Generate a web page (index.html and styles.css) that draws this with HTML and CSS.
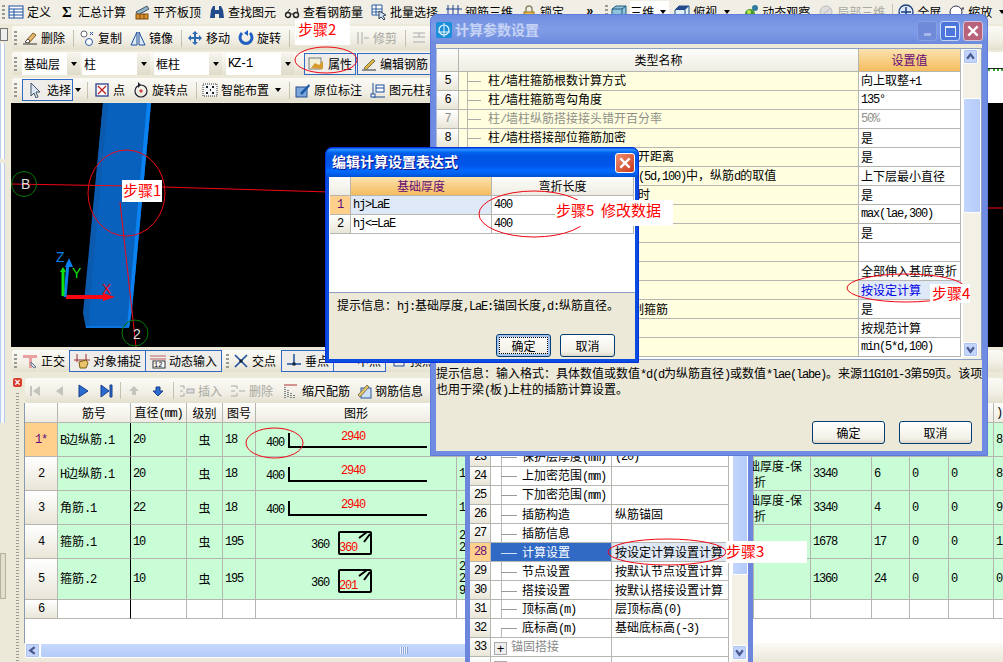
FILE: index.html
```html
<!DOCTYPE html>
<html lang="zh-CN">
<head>
<meta charset="utf-8">
<title>计算参数设置</title>
<link rel="stylesheet" href="styles.css">
</head>
<body>
<div class="app">

<div class="bar r1">
  <span class="grip"></span>
  <span class="t"><svg class="i" viewBox="0 0 16 16"><rect x="1" y="2" width="14" height="12" fill="#fff" stroke="#1c4f9c"/><path d="M1 5h14M6 5v9M1 8h14M1 11h14" stroke="#1c4f9c"/></svg>定义</span>
  <span class="t"><span class="sigma">Σ</span>汇总计算</span>
  <span class="t"><svg class="i" viewBox="0 0 16 16"><path d="M2 8l11-6 2 3-11 6z" fill="#8fb2c8" stroke="#456"/><rect x="2" y="10" width="12" height="5" fill="#d9902a" stroke="#7a4a10"/><path d="M6 10v5M10 10v5" stroke="#7a4a10"/></svg>平齐板顶</span>
  <span class="t"><svg class="i" viewBox="0 0 16 16"><path d="M2 6l2-4h2v12H1zM14 6l-2-4h-2v12h5zM6 6h4v4H6z" fill="#234b8c"/></svg>查找图元</span>
  <span class="t"><svg class="i" viewBox="0 0 16 16"><circle cx="4" cy="11" r="2.5" fill="none" stroke="#222" stroke-width="1.4"/><circle cx="12" cy="11" r="2.5" fill="none" stroke="#222" stroke-width="1.4"/><path d="M6 10h4M2 10l4-5M14 10l-1-6" stroke="#222" fill="none"/></svg>查看钢筋量</span>
  <span class="t"><svg class="i" viewBox="0 0 16 16"><path d="M1 1h10v10H1zM1 5h10M1 8h10M5 1v10" fill="#fff" stroke="#29599e"/><path d="M8 7l7 4-3 1 2 3-1 1-3-3-2 2z" fill="#cfe0f5" stroke="#345"/></svg>批量选择</span>
  <span class="t"><svg class="i" viewBox="0 0 16 16"><path d="M2 1v14M7 1v14M12 1v14M0 5h16M0 11h16" stroke="#1c3f90" fill="none"/></svg>钢筋三维</span>
  <span class="t"><svg class="i" viewBox="0 0 16 16"><path d="M5 8V5a3 3 0 016 0v3" fill="none" stroke="#8a8a6a" stroke-width="1.5"/><rect x="3" y="8" width="10" height="7" fill="#f0c040" stroke="#96701a"/></svg>锁定</span>
  <span class="more lat">»</span>
  <span class="grip g2"></span>
  <span class="t t0"><svg class="i" viewBox="0 0 16 16"><path d="M1 5l4-3h10v9l-4 4H1z" fill="#8fc3d9" stroke="#1f5a80"/><path d="M1 5h10v10M11 5l4-3" fill="none" stroke="#1f5a80"/></svg><span class="hl">三维<span class="arr"></span></span></span>
  <span class="t"><svg class="i" viewBox="0 0 16 16"><path d="M1 6l4-4h10v9l-4 4H1z" fill="#dfeff6" stroke="#1f4f80"/><path d="M1 6l4-4h10l-4 4z" fill="#244a8c"/><path d="M11 6v9" stroke="#1f4f80"/></svg>俯视<span class="arr a1"></span></span>
  <span class="t"><svg class="i" viewBox="0 0 16 16"><circle cx="7" cy="10" r="5" fill="#4a9a2c"/><circle cx="12" cy="4" r="3" fill="#2f7c9e"/><circle cx="6" cy="8" r="2" fill="#bfe84a"/></svg>动态观察</span>
  <span class="t off"><svg class="i" viewBox="0 0 16 16"><circle cx="8" cy="8" r="6" fill="#ddd" stroke="#bbb"/><path d="M3 12L13 4" stroke="#bbb"/></svg>局部三维</span>
  <span class="sep s1"></span>
  <span class="t"><svg class="i" viewBox="0 0 16 16"><circle cx="8" cy="8" r="7" fill="#dfe8f6" stroke="#1c3f80" stroke-width="1.3"/><path d="M8 3v10M3 8h10" stroke="#1c3f80" stroke-width="1.5"/></svg>全屏</span>
  <span class="t"><svg class="i" viewBox="0 0 16 16"><circle cx="7" cy="8" r="6" fill="#fff" stroke="#335"/><path d="M12 5h3M12 11h3M14 3v2" stroke="#335"/></svg>缩放<span class="arr a2"></span></span>
</div>

<div class="body">
  <aside class="side">
    <div class="tab"></div>
    <div class="tree"></div>
    <div class="tree tree2"></div>
    <div class="tabs"></div>
  </aside>

  <main class="main">
    <div class="bar r2">
      <span class="grip"></span>
      <span class="t"><svg class="i" viewBox="0 0 16 16"><path d="M1 14h14" stroke="#333"/><path d="M3 12l8-9 3 2-7 8z" fill="#e9b96e" stroke="#7a5a20"/><path d="M3 12l3-3 2 2-2 2z" fill="#fff" stroke="#555"/></svg>删除</span>
      <span class="sep"></span>
      <span class="t"><svg class="i" viewBox="0 0 16 16"><circle cx="5" cy="4" r="3" fill="#fff" stroke="#667"/><circle cx="10" cy="12" r="3.5" fill="#fff" stroke="#29599e"/><path d="M11 2l3 3M14 2l-3 3" stroke="#29599e"/></svg>复制</span>
      <span class="t"><svg class="i" viewBox="0 0 16 16"><path d="M7 2L1 15h6zM9 2l6 13H9z" fill="#dfeaf8" stroke="#1c4f9c"/></svg>镜像</span>
      <span class="sep"></span>
      <span class="t"><svg class="i" viewBox="0 0 16 16"><path d="M8 1l3 3H9v3h3V5l3 3-3 3V9H9v3h2l-3 3-3-3h2V9H4v2L1 8l3-3v2h3V4H5z" fill="#2d6bb5"/></svg>移动</span>
      <span class="t"><svg class="i" viewBox="0 0 16 16"><path d="M4 3a6 6 0 108 0" fill="none" stroke="#2060c0" stroke-width="3"/><path d="M10 0v6l-4-3z" fill="#2060c0"/></svg>旋转</span>
      <span class="sep"></span>
      <span class="t off t-gap"><svg class="i" viewBox="0 0 16 16"><path d="M4 2v12M8 2v12M10 8h5" stroke="#aaa" fill="none"/></svg>修剪</span>
      <span class="sep"></span>
      <span class="t off"><svg class="i" viewBox="0 0 16 16"><path d="M2 3h12M2 7h12M2 12h12M8 3v4" stroke="#aaa" fill="none"/></svg>打断</span>
    </div>

    <div class="bar r3">
      <span class="grip"></span>
      <span class="combo c-s">基础层<i class="drop"></i></span>
      <span class="combo">柱<i class="drop"></i></span>
      <span class="combo">框柱<i class="drop"></i></span>
      <span class="combo"><span class="lat">KZ-1</span><i class="drop"></i></span>
      <span class="tb-btn b-first"><svg class="i" viewBox="0 0 16 16"><rect x="1" y="2" width="12" height="11" fill="#f3f0d8" stroke="#7a7a7a"/><path d="M3 12l4-5 4 2 4-4v8z" fill="#d89a2c"/></svg>属性</span>
      <span class="tb-btn"><svg class="i" viewBox="0 0 16 16"><path d="M1 14h14" stroke="#333"/><path d="M3 12l9-9 2 2-9 9z" fill="#e0b040" stroke="#775"/></svg>编辑钢筋</span>
    </div>

    <div class="bar r4">
      <span class="grip"></span>
      <span class="tb-btn b-sel"><svg class="i" viewBox="0 0 16 16"><path d="M3 1l9 9H8l2 5-2 1-2-5-3 3z" fill="#dbe6f6" stroke="#456"/></svg>选择</span>
      <span class="arr a3"></span>
      <span class="sep"></span>
      <span class="t t-pt"><svg class="i" viewBox="0 0 16 16"><rect x="2" y="2" width="12" height="12" fill="#fff" stroke="#27408c" stroke-width="1.3"/><path d="M4 4l8 8M12 4l-8 8" stroke="#c02020" stroke-width="1.3"/></svg>点</span>
      <span class="t"><svg class="i" viewBox="0 0 16 16"><circle cx="8" cy="9" r="6" fill="none" stroke="#223" stroke-width="1.2"/><path d="M5 0l3 3-3 3z" fill="#223"/><path d="M8 7v4M6 9h4" stroke="#c02020"/></svg>旋转点</span>
      <span class="sep"></span>
      <span class="t"><svg class="i" viewBox="0 0 16 16"><rect x="1" y="2" width="14" height="12" fill="#f6f6f6" stroke="#333" stroke-dasharray="1 1"/><path d="M4 5h2M10 5h2M4 11h2M10 11h2M8 8h1" stroke="#123" stroke-width="2"/></svg>智能布置<span class="arr a4"></span></span>
      <span class="sep"></span>
      <span class="t"><svg class="i" viewBox="0 0 16 16"><rect x="1" y="5" width="11" height="10" fill="#7da8dc" stroke="#2a4f8c"/><path d="M5 11l9-9 1 2-8 9z" fill="#1c5aa8"/></svg>原位标注</span>
      <span class="t"><svg class="i" viewBox="0 0 16 16"><path d="M3 1v14h12" fill="none" stroke="#1c4f9c"/><rect x="1" y="12" width="4" height="3" fill="#fff" stroke="#1c4f9c"/><rect x="6" y="3" width="8" height="7" fill="#fff" stroke="#1c4f9c"/><path d="M6 6h8" stroke="#1c4f9c"/></svg>图元柱表</span>
    </div>

    <div class="canvas">
      <svg class="scene" viewBox="11 103 992 244">
        <path d="M103 103L84 313l2 15h43l3-20 19-205z" fill="#0862bd"/>
        <path d="M103 103h5L90 300l-1 28h-3l-3-15z" fill="#0b5aae"/>
        <path d="M147 103h4L132 310l-3 18-2-1z" fill="#0a82f2"/>
        <path d="M86 326h43v2H86z" fill="#0a74dc"/>
        <path d="M11 184l119 2 200 6M988 208h15" fill="none" stroke="#f00614"/>
        <path d="M120 202l16 145" stroke="#f00614"/>
        <circle cx="24" cy="184" r="12.500" fill="none" stroke="#0a780a"/>
        <circle cx="135" cy="333" r="13" fill="none" stroke="#0a780a"/>
        <text class="ax w" x="21" y="189">B</text>
        <text class="ax w" x="133" y="339">2</text>
        <ellipse cx="126.500" cy="193" rx="38.500" ry="43" fill="none" stroke="#f00614"/>
        <path d="M66 297h38" stroke="#f80612" stroke-width="4"/>
        <path d="M103 293l12 4-12 4z" fill="#f80612"/>
        <path d="M65 297l3-34" stroke="#0a80f0" stroke-width="3"/>
        <path d="M69 258l4 9h-8z" fill="#0a80f0"/>
        <path d="M63 296v-26" stroke="#10e010" stroke-width="3"/>
        <path d="M63 267l3 5h-6z" fill="#10e010"/>
        <text class="lg zb" x="56" y="262">Z</text>
        <text class="lg yg" x="72" y="278">Y</text>
        <text class="lg xr" x="102" y="294">X</text>
      </svg>
    </div>

    <div class="bar r5">
      <span class="grip"></span>
      <span class="t t5"><svg class="i" viewBox="0 0 16 16"><path d="M1 2h14v3h-5v10H7V5H1z" fill="#e8a0a0"/><path d="M9 9l5 5-2 1-3-3z" fill="#cfdcee" stroke="#678"/></svg>正交</span>
      <span class="tb-btn"><svg class="i" viewBox="0 0 16 16"><path d="M3 1v8M12 1v8" stroke="#a03030"/><path d="M0 7h16" stroke="#a03030"/><path d="M5 9l7-2 2 3-2 5H6z" fill="#e8c46a" stroke="#7a5a10"/></svg>对象捕捉</span>
      <span class="tb-btn b-next"><svg class="i" viewBox="0 0 16 16"><path d="M0 3h16M0 6h16" stroke="#c06060"/><rect x="3" y="8" width="12" height="7" fill="#fff" stroke="#333"/><text class="mini" x="4" y="14">12</text></svg>动态输入</span>
      <span class="grip g5"></span>
      <span class="t t6"><svg class="i" viewBox="0 0 16 16"><path d="M2 2l12 12M14 2L2 14" stroke="#1c4f9c" stroke-width="1.600"/><rect x="6.500" y="6.500" width="3" height="3" fill="#123"/></svg>交点</span>
      <span class="tb-btn"><svg class="i" viewBox="0 0 16 16"><path d="M8 1v10M1 11h14" stroke="#1c4f9c" stroke-width="1.500"/><rect x="6.500" y="9.500" width="3" height="3" fill="#123"/></svg>垂点</span>
      <span class="tb-btn b-next"><svg class="i" viewBox="0 0 16 16"><path d="M1 9h14" stroke="#1c4f9c"/></svg>中点</span>
      <span class="t t7"><svg class="i" viewBox="0 0 16 16"><rect x="3" y="3" width="10" height="10" fill="none" stroke="#1c4f9c"/></svg>顶点</span>
    </div>

    <section class="lower">
      <div class="lgrip"><span class="xbtn">×</span><span class="dots"></span></div>
      <div class="lmain">
        <div class="bar r6">
          <svg class="n" viewBox="0 0 16 16"><path d="M3 3h2v10H3zM13 3v10L6 8z" fill="#c4c4bc"/></svg>
          <svg class="n" viewBox="0 0 16 16"><path d="M12 3v10L5 8z" fill="#c4c4bc"/></svg>
          <svg class="n" viewBox="0 0 16 16"><path d="M4 2v12l9-6z" fill="#2a6bd0" stroke="#163f88"/></svg>
          <svg class="n nl" viewBox="0 0 16 16"><path d="M2 2v12l8-6z" fill="#2a6bd0" stroke="#163f88"/><path d="M11 2h2v12h-2z" fill="#2a6bd0" stroke="#163f88"/></svg>
          <span class="sep"></span>
          <svg class="n" viewBox="0 0 16 16"><path d="M8 3l5 5h-3v4H6V8H3z" fill="#c4c4bc"/></svg>
          <svg class="n nl2" viewBox="0 0 16 16"><path d="M8 13l5-5h-3V4H6v4H3z" fill="#2a6bd0" stroke="#163f88"/></svg>
          <span class="sep"></span>
          <span class="t off"><svg class="i" viewBox="0 0 16 16"><path d="M1 3h4M1 13h4M5 3v3M5 10v3M1 8h3" stroke="#aaa" fill="none"/><rect x="8" y="6" width="7" height="4" fill="#ddd" stroke="#aaa"/></svg>插入</span>
          <span class="t off t-x"><svg class="i" viewBox="0 0 16 16"><path d="M1 3h6v3M1 13h6v-3M1 8h4" stroke="#aaa" fill="none"/><path d="M9 8h6" stroke="#aaa"/></svg>删除</span>
          <span class="t t-y"><svg class="i" viewBox="0 0 16 16"><path d="M2 4v11M5 7v8M8 10v5M11 12v3" stroke="#123" stroke-dasharray="1 1"/><path d="M1 2h13" stroke="#b03030"/></svg>缩尺配筋</span>
          <span class="t"><svg class="i" viewBox="0 0 16 16"><rect x="5" y="5" width="10" height="10" fill="#cfe0f5" stroke="#29599e"/><path d="M2 12L11 2l2 2-9 10z" fill="#e8c46a" stroke="#775"/></svg>钢筋信息</span>
        </div>

        <div class="gridwrap">
          <table class="bars">
            <colgroup><col class="k1"><col class="k2"><col class="k3"><col class="k4"><col class="k5"><col class="k6"><col class="k7"><col class="k8"><col class="k9"><col class="k10"><col class="k11"><col class="k12"><col class="k13"></colgroup>
            <thead>
              <tr class="rh"><th class="hd"></th><th class="hd">筋号</th><th class="hd">直径<span class="lat">(mm)</span></th><th class="hd">级别</th><th class="hd">图号</th><th class="hd">图形</th><th class="hd"></th><th class="hd"></th><th class="hd"></th><th class="hd"></th><th class="hd"></th><th class="hd"></th><th class="hd hl-end lat">)</th></tr>
            </thead>
            <tbody>
              <tr class="r34 on">
                <th class="num cur lat">1*</th><td class="name"><span class="lat">B</span>边纵筋<span class="lat">.1</span></td><td class="lat">20</td><td class="ctr">虫</td><td class="lat">18</td>
                <td class="fig"><svg class="shape" viewBox="0 0 200 33"><path d="M33 10v14h138" fill="none" stroke="#000" stroke-width="2"/><text class="lat" x="10" y="23">400</text><text class="lat red" x="85" y="17">2940</text></svg></td>
                <td class="lat">1</td><td></td><td></td><td></td><td></td><td></td><td class="lat">8</td>
              </tr>
              <tr class="r34 on">
                <th class="num lat">2</th><td class="name"><span class="lat">H</span>边纵筋<span class="lat">.1</span></td><td class="lat">20</td><td class="ctr">虫</td><td class="lat">18</td>
                <td class="fig"><svg class="shape" viewBox="0 0 200 33"><path d="M33 10v14h138" fill="none" stroke="#000" stroke-width="2"/><text class="lat" x="10" y="22">400</text><text class="lat red" x="85" y="17">2940</text></svg></td>
                <td class="lat">1</td><td class="over">础厚度<span class="lat">-</span>保<br>折</td><td class="lat">3340</td><td class="lat">6</td><td class="lat">0</td><td class="lat">0</td><td class="lat">8</td>
              </tr>
              <tr class="r34 on">
                <th class="num lat">3</th><td class="name">角筋<span class="lat">.1</span></td><td class="lat">22</td><td class="ctr">虫</td><td class="lat">18</td>
                <td class="fig"><svg class="shape" viewBox="0 0 200 33"><path d="M33 10v14h138" fill="none" stroke="#000" stroke-width="2"/><text class="lat" x="10" y="22">400</text><text class="lat red" x="85" y="17">2940</text></svg></td>
                <td class="lat">1</td><td class="over">础厚度<span class="lat">-</span>保<br>折</td><td class="lat">3340</td><td class="lat">4</td><td class="lat">0</td><td class="lat">0</td><td class="lat">9</td>
              </tr>
              <tr class="r34 on">
                <th class="num lat">4</th><td class="name">箍筋<span class="lat">.1</span></td><td class="lat">10</td><td class="ctr">虫</td><td class="lat">195</td>
                <td class="fig"><svg class="shape" viewBox="0 0 200 33"><rect x="83" y="7" width="32" height="22" rx="1" fill="none" stroke="#000" stroke-width="2"/><path d="M103 13l8-6M108 17l6-8" stroke="#000" stroke-width="2"/><text class="lat" x="55" y="23">360</text><text class="lat red" x="83" y="26">360</text></svg></td>
                <td class="lat lh">2<br>2</td><td></td><td class="lat">1678</td><td class="lat">17</td><td class="lat">0</td><td class="lat">0</td><td class="lat">1</td>
              </tr>
              <tr class="r41 on">
                <th class="num lat">5</th><td class="name">箍筋<span class="lat">.2</span></td><td class="lat">10</td><td class="ctr">虫</td><td class="lat">195</td>
                <td class="fig"><svg class="shape" viewBox="0 0 200 40"><rect x="83" y="11" width="32" height="22" rx="1" fill="none" stroke="#000" stroke-width="2"/><path d="M103 17l8-6M108 21l6-8" stroke="#000" stroke-width="2"/><text class="lat" x="55" y="27">360</text><text class="lat red" x="83" y="30">201</text></svg></td>
                <td class="lat lh">2<br>2<br>9</td><td></td><td class="lat">1360</td><td class="lat">24</td><td class="lat">0</td><td class="lat">0</td><td class="lat">0</td>
              </tr>
              <tr class="r19">
                <th class="num lat">6</th><td class="name"></td><td></td><td></td><td></td><td></td><td></td><td></td><td></td><td></td><td></td><td></td><td></td>
              </tr>
            </tbody>
          </table>
        </div>

        <div class="hscroll">
          <span class="sb-btn"><svg viewBox="0 0 8 8" class="chev"><path d="M6 1L2 4l4 3" fill="none" stroke="#4a5a90" stroke-width="2"/></svg></span>
          <span class="hthumb"><span class="hgrip"></span></span>
        </div>
      </div>
    </section>
  </main>
</div>

<div class="rest"><i class="tick"></i></div>

<div class="pane">
  <table class="plist">
    <colgroup><col class="p1"><col class="p2"><col class="p3"></colgroup>
    <tbody>
      <tr><th class="num lat">23</th><td class="tree-c"><i class="dash"></i>保护层厚度<span class="lat">(mm)</span></td><td class="lat">(20)</td></tr>
      <tr><th class="num lat">24</th><td class="tree-c"><i class="dash"></i>上加密范围<span class="lat">(mm)</span></td><td></td></tr>
      <tr><th class="num lat">25</th><td class="tree-c"><i class="dash"></i>下加密范围<span class="lat">(mm)</span></td><td></td></tr>
      <tr><th class="num lat">26</th><td class="tree-c"><i class="dash"></i>插筋构造</td><td>纵筋锚固</td></tr>
      <tr><th class="num lat">27</th><td class="tree-c"><i class="dash"></i>插筋信息</td><td></td></tr>
      <tr><th class="num cur lat">28</th><td class="tree-c blue"><i class="dash"></i>计算设置</td><td class="pale">按设定计算设置计算</td></tr>
      <tr><th class="num lat">29</th><td class="tree-c"><i class="dash"></i>节点设置</td><td>按默认节点设置计算</td></tr>
      <tr><th class="num lat">30</th><td class="tree-c"><i class="dash"></i>搭接设置</td><td>按默认搭接设置计算</td></tr>
      <tr><th class="num lat">31</th><td class="tree-c"><i class="dash"></i>顶标高<span class="lat">(m)</span></td><td>层顶标高<span class="lat">(0)</span></td></tr>
      <tr><th class="num lat">32</th><td class="tree-c tree-end"><i class="dash"></i>底标高<span class="lat">(m)</span></td><td>基础底标高<span class="lat">(-3)</span></td></tr>
      <tr class="group"><th class="num lat">33</th><td class="grp"><i class="plus">+</i>锚固搭接</td><td></td></tr>
      <tr class="group"><th class="num"></th><td class="grp"><i class="plus"></i></td><td></td></tr>
    </tbody>
  </table>
  <div class="vscroll vs-p">
    <span class="vthumb vt-p"></span>
    <span class="sb-btn sb-b"><svg viewBox="0 0 8 8" class="chev"><path d="M1 2l3 4 3-4" fill="none" stroke="#4a5a90" stroke-width="2"/></svg></span>
  </div>
</div>

<div class="win dlg1">
  <header class="title t-off">
    <svg class="logo" viewBox="0 0 16 16"><rect width="16" height="16" rx="2" fill="#1a8fd8"/><circle cx="8" cy="8" r="5" fill="none" stroke="#e8f6ff" stroke-width="1.200"/><path d="M8 1v14M2 10h12" stroke="#e8f6ff"/></svg>
    <span class="cap">计算参数设置</span>
    <span class="ctl c-min"><i class="minbar"></i></span>
    <span class="ctl c-max"><i class="maxbox"></i></span>
    <span class="ctl c-close off-x"><svg viewBox="0 0 12 12"><path d="M2 2l8 8M10 2l-8 8" stroke="#fff" stroke-width="2"/></svg></span>
  </header>
  <div class="client">
    <div class="gridbox">
      <table class="params">
        <colgroup><col class="q1"><col class="q2"><col class="q3"><col class="q4"></colgroup>
        <thead><tr class="qh"><th class="hd"></th><th class="hd" colspan="2">类型名称</th><th class="hd hot">设置值</th></tr></thead>
        <tbody>
          <tr><th class="num lat">5</th><td class="gut"></td><td><i class="dash2"></i>柱<span class="lat">/</span>墙柱箍筋根数计算方式</td><td class="val">向上取整<span class="lat">+1</span></td></tr>
          <tr><th class="num lat">6</th><td class="gut"></td><td><i class="dash2"></i>柱<span class="lat">/</span>墙柱箍筋弯勾角度</td><td class="val lat">135°</td></tr>
          <tr class="dim"><th class="num lat">7</th><td class="gut"></td><td><i class="dash2"></i>柱<span class="lat">/</span>墙柱纵筋搭接接头错开百分率</td><td class="val lat">50%</td></tr>
          <tr><th class="num lat">8</th><td class="gut"></td><td><i class="dash2"></i>柱<span class="lat">/</span>墙柱搭接部位箍筋加密</td><td class="val">是</td></tr>
          <tr><th class="num lat">9</th><td class="gut"></td><td><i class="dash2"></i>柱<span class="lat">/</span>墙柱纵筋机械连接接头错开距离</td><td class="val">是</td></tr>
          <tr><th class="num lat">10</th><td class="gut"></td><td><i class="dash2"></i>柱<span class="lat">/</span>墙柱箍筋加密间距<span class="lat">L</span>取<span class="lat">min(5d,100)</span>中，纵筋<span class="lat">d</span>的取值</td><td class="val">上下层最小直径</td></tr>
          <tr><th class="num lat">11</th><td class="gut"></td><td><i class="dash2"></i>柱<span class="lat">/</span>墙柱变截面处的纵筋弯折时</td><td class="val">是</td></tr>
          <tr><th class="num lat">12</th><td class="gut"></td><td><i class="dash2"></i>柱<span class="lat">/</span>墙柱插筋锚固长度</td><td class="val lat">max(lae,300)</td></tr>
          <tr><th class="num lat">13</th><td class="gut"></td><td><i class="dash2"></i>柱<span class="lat">/</span>墙柱基础插筋弯折</td><td class="val">是</td></tr>
          <tr><th class="num lat">14</th><td class="gut"></td><td><i class="dash2"></i>基础插筋</td><td class="val"></td></tr>
          <tr><th class="num lat">15</th><td class="gut"></td><td><i class="dash2"></i>柱<span class="lat">/</span>墙柱基底弯折方式</td><td class="val">全部伸入基底弯折</td></tr>
          <tr class="pick"><th class="num lat">16</th><td class="gut"></td><td><i class="dash2"></i>基础插筋弯折长度</td><td class="val">按设定计算</td></tr>
          <tr><th class="num lat">17</th><td class="gut"></td><td><i class="dash2"></i>柱墙基础插筋范围内是否设制箍筋</td><td class="val">是</td></tr>
          <tr><th class="num lat">18</th><td class="gut"></td><td><i class="dash2"></i>柱<span class="lat">/</span>墙柱箍筋加密范围</td><td class="val">按规范计算</td></tr>
          <tr><th class="num lat">19</th><td class="gut"></td><td><i class="dash2"></i>柱<span class="lat">/</span>墙柱箍筋起步距离</td><td class="val lat">min(5*d,100)</td></tr>
        </tbody>
      </table>
      <div class="vscroll vs-m">
        <span class="sb-btn"><svg viewBox="0 0 8 8" class="chev"><path d="M1 6l3-4 3 4" fill="none" stroke="#4a5a90" stroke-width="2"/></svg></span>
        <span class="vthumb vt-m"></span>
        <span class="sb-btn sb-b"><svg viewBox="0 0 8 8" class="chev"><path d="M1 2l3 4 3-4" fill="none" stroke="#4a5a90" stroke-width="2"/></svg></span>
      </div>
    </div>
    <p class="hint">提示信息：输入格式：具体数值或数值<span class="lat">*d(d</span>为纵筋直径<span class="lat">)</span>或数值<span class="lat">*lae(labe)</span>。来源<span class="lat">11G101-3</span>第<span class="lat">59</span>页。该项<br>也用于梁<span class="lat">(</span>板<span class="lat">)</span>上柱的插筋计算设置。</p>
    <div class="actions">
      <button class="xp">确定</button>
      <button class="xp">取消</button>
    </div>
  </div>
</div>

<div class="win dlg2">
  <header class="title t-on">
    <span class="cap2">编辑计算设置表达式</span>
    <span class="ctl c-close2"><svg viewBox="0 0 12 12"><path d="M2 2l8 8M10 2l-8 8" stroke="#fff" stroke-width="2"/></svg></span>
  </header>
  <div class="client cl2">
    <div class="exprbox">
      <table class="expr">
        <colgroup><col class="e1"><col class="e2"><col class="e3"></colgroup>
        <thead><tr class="eh"><th class="hd"></th><th class="hd hot">基础厚度</th><th class="hd">弯折长度</th></tr></thead>
        <tbody>
          <tr><th class="num cur lat">1</th><td class="pale lat">hj&gt;LaE</td><td class="lat">400</td></tr>
          <tr><th class="num lat">2</th><td class="lat">hj&lt;=LaE</td><td class="lat">400</td></tr>
        </tbody>
      </table>
    </div>
    <p class="hint2">提示信息：<span class="lat">hj:</span>基础厚度<span class="lat">,LaE:</span>锚固长度<span class="lat">,d:</span>纵筋直径。</p>
    <div class="actions a2nd">
      <button class="xp def">确定</button>
      <button class="xp">取消</button>
    </div>
  </div>
</div>

<svg class="marks" viewBox="0 0 1003 662">
  <ellipse cx="326" cy="60" rx="31" ry="13" />
  <ellipse cx="274.500" cy="443" rx="28.500" ry="15" />
  <ellipse cx="667" cy="552" rx="59" ry="13" />
  <ellipse cx="906" cy="288" rx="59" ry="14" />
  <ellipse cx="534" cy="214" rx="55" ry="23" />
</svg>
<span class="note n1">步骤1</span>
<span class="note n2">步骤2</span>
<span class="note n3">步骤3</span>
<span class="note n4">步骤4</span>
<span class="note n5">步骤5&nbsp;&nbsp;修改数据</span>

</div>
</body>
</html>
```

FILE: styles.css
```css
* { box-sizing: border-box; }
html, body { margin: 0; padding: 0; }
body { background: #ece9d8; color: #000; font: 12px/14px "Noto Sans CJK SC", "Liberation Sans", sans-serif; }
.app { position: relative; width: 1003px; height: 662px; overflow: hidden; display: flex; flex-direction: column; background: #ece9d8; }
.lat { font-family: "Liberation Mono", monospace; font-size: 12px; letter-spacing: -1.2px; }

/* toolbars */
.bar { display: flex; align-items: center; white-space: nowrap; background: linear-gradient(#fbfaf5, #f1efe5 60%, #e4e0ce); border-radius: 3px; flex: none; }
.grip { width: 3px; height: 14px; margin-right: 5px; flex: none; background: repeating-linear-gradient(#9a9a90 0 2px, transparent 2px 4px); }
.g2 { margin-left: 0; margin-right: 5px; }
.g5 { margin-left: 4px; margin-right: 4px; }
.t { display: flex; align-items: center; gap: 3px; margin-right: 8px; flex: none; }
.off { color: #a8a8a0; }
.i { width: 16px; height: 16px; flex: none; display: block; }
.sep { width: 1px; height: 17px; background: #c5c2b0; margin-right: 5px; flex: none; }
.s1 { margin-left: -1px; margin-right: 5px; }
.arr { display: inline-block; width: 0; height: 0; border: 3.5px solid transparent; border-top: 4px solid #000; border-bottom: 0; flex: none; }
.sigma { font: bold 15px/16px "Liberation Serif", serif; width: 16px; text-align: center; }

.r1 { height: 24px; padding-left: 0; background: #f1efe5; }
.r1 > .grip { margin-left: 2px; margin-right: 3px; }
.more { width: 10px; margin: 0 11px 0 14px; font-weight: bold; }
.t0 { margin-right: 5px; }
.hl { display: flex; align-items: center; gap: 6px; background: #fff; padding-right: 3px; height: 22px; }
.a1 { margin-left: 4px; margin-right: 5px; }
.a2 { margin-left: 4px; }

.body { flex: 1; display: flex; min-height: 0; }
.side { width: 11px; flex: none; display: flex; flex-direction: column; padding-top: 4px; background: #ece9d8; }
.tab { height: 13px; width: 8px; border: 1px solid #777; background: #eee; }
.tree { height: 116px; width: 5px; border-right: 1px solid #b9cdea; border-left: 1px solid #b9cdea; background: #fff; margin-top: 2px; }
.tree2 { height: 260px; margin-top: 4px; background: #f5f8fd; }
.tabs { height: 46px; width: 6px; margin-top: 130px; background: #e2dfcc; border: 1px solid #b5b29e; }
.main { flex: 1; min-width: 0; display: flex; flex-direction: column; }

.r2 { height: 24px; margin: 2px 0 2px 1px; padding-left: 2px; }
.t-gap { margin-left: 59px; }
.r3 { height: 23px; margin: 0 0 3px 1px; padding-left: 2px; }
.combo { width: 68px; height: 22px; background: #fff; margin-right: 4px; display: flex; align-items: center; padding-left: 2px; justify-content: space-between; flex: none; }
.c-s { width: 58px; margin-right: 2px; }
.drop { width: 13px; height: 22px; background: linear-gradient(#f6f4ec, #dedbc9); flex: none; display: flex; align-items: center; justify-content: center; }
.drop::after { content: ""; border: 3.5px solid transparent; border-top: 4px solid #000; border-bottom: 0; }
.tb-btn { display: flex; align-items: center; gap: 3px; height: 22px; padding: 0 3px; border: 1px solid #316ac5; background: #eeedea; flex: none; }
.b-first { margin-left: 6px; gap: 4px; padding: 0 3px; margin-right: 1px; }
.b-next { margin-left: -1px; }
.r4 { height: 24px; margin-left: 1px; padding-left: 2px; }
.b-sel { padding: 0 4px 0 5px; gap: 3px; width: 51px; }
.a3 { margin: 0 6px 0 2px; }
.t-pt { margin-left: 1px; gap: 3px; }
.a4 { margin-left: 3px; }

.canvas { position: relative; height: 244px; background: #000; overflow: hidden; flex: none; margin-top: 1px; }
.scene { position: absolute; inset: 0; width: 100%; height: 100%; }
.ax { font: 14px "Liberation Sans", sans-serif; }
.w { fill: #dcdcdc; }
.lg { font: 14px "Liberation Sans", sans-serif; }
.zb { fill: #0a80f0; }
.yg { fill: #10e010; }
.xr { fill: #f00614; }

.r5 { height: 22px; margin: 3px 0 0 1px; padding-left: 2px; }
.r5 .tb-btn { height: 22px; padding: 0 4px; }
.t5 { margin-right: 4px; }
.t6 { margin-right: 5px; }
.t7 { margin-left: 5px; }
.mini { font: 7px "Liberation Mono", monospace; }

.lower { flex: 1; display: flex; min-height: 0; margin-top: 4px; }
.lgrip { width: 13px; flex: none; display: flex; flex-direction: column; align-items: center; }
.xbtn { width: 9px; height: 9px; margin-top: 2px; background: #d83c2c; border-radius: 2px; color: #fff; font: bold 10px/9px "Liberation Sans", sans-serif; text-align: center; }
.dots { flex: 1; width: 3px; margin-top: 6px; background: repeating-linear-gradient(#9a9a90 0 1px, transparent 1px 3px); }
.lmain { flex: 1; min-width: 0; display: flex; flex-direction: column; }
.r6 { height: 25px; margin: 2px 0 0 1px; padding-left: 2px; }
.n { width: 16px; height: 16px; margin-right: 8px; flex: none; }
.nl { margin-right: 5px; }
.nl2 { margin-right: 7px; }
.t-x { margin-right: 10px; }
.t-y { margin-right: 6px; }

.gridwrap { flex: 1; min-height: 0; overflow: hidden; background: #fff; border-left: 1px solid #8a9ab0; }
table { border-collapse: separate; border-spacing: 0; table-layout: fixed; }
th, td { padding: 0 2px; border-right: 1px solid #b6b6b0; border-bottom: 1px solid #b6b6b0; overflow: hidden; white-space: nowrap; font-weight: 400; text-align: left; }
.hd { background: linear-gradient(#fdfdfb, #eeece2); text-align: center; color: #000; }
.hot { background: linear-gradient(#fbe2ae, #f5bc5e); color: #660a78; }
.num { background: linear-gradient(#fff, #e9e6d8); text-align: center; color: #000; padding: 0; }
.num.cur { background: #ffd08c; color: #660a78; }

.bars { width: 1010px; }
.k1 { width: 33px; } .k2 { width: 73px; } .k3 { width: 56px; } .k4 { width: 36px; } .k5 { width: 33px; } .k6 { width: 201px; }
.k7 { width: 297px; } .k8 { width: 57px; } .k9 { width: 61px; } .k10 { width: 38px; } .k11 { width: 39px; } .k12 { width: 45px; } .k13 { width: 41px; }
.rh { height: 20px; }
.r34 { height: 34px; }
.r41 { height: 41px; }
.r19 { height: 19px; }
.on td { background: #c9fdd6; }
.bars .name { border-right: 1px solid #000; }
.ctr { text-align: center; }
.fig { padding: 0; }
.shape { display: block; width: 200px; }
.shape text { fill: #000; }
.shape .red { fill: #f00; }
.lh { line-height: 12px; }
.bars .over { padding: 0; line-height: 13px; text-indent: -6px; overflow: visible; position: relative; }
.hd.hl-end { text-align: left; padding-left: 2px; }

.hscroll { height: 17px; display: flex; margin: 0 0 2px 1px; background: linear-gradient(#fbfaf5, #ece9dd); flex: none; }
.sb-btn { width: 15px; height: 15px; border: 1px solid #fff; background: #c3d5fd; border-radius: 2px; display: flex; align-items: center; justify-content: center; flex: none; box-shadow: 0 0 0 1px #aec4ef inset; }
.chev { width: 9px; height: 9px; }
.hthumb { width: 430px; height: 15px; background: linear-gradient(#c6d8fc, #b4cbf9); border: 1px solid #fff; border-radius: 2px; display: flex; justify-content: flex-end; align-items: center; padding-right: 61px; }
.hgrip { width: 8px; height: 7px; background: repeating-linear-gradient(90deg, #eef3fe 0 1px, #8da4da 1px 2px); }

/* strip of the drawing area visible beside the dialog */
.rest { position: absolute; left: 988px; top: 52px; width: 15px; height: 51px; background: #fff; z-index: 1; }
.tick { display: block; margin-top: 16px; height: 3px; border-top: 1px solid #222; border-bottom: 2px dotted #3aa53a; }

/* property pane behind the dialog */
.pane { position: absolute; left: 465px; top: 448px; width: 288px; height: 214px; z-index: 2; display: flex; background: #fff; border: solid #6b86dc; border-width: 0 6px 0 5px; }
.plist { width: 259px; flex: none; align-self: flex-start; }
.p1 { width: 21px; } .p2 { width: 121px; } .p3 { width: 117px; }
.plist tr { height: 19px; }
.plist td { padding: 0 0 0 3px; }
.plist .tree-c { padding: 0 0 0 10px; background: linear-gradient(90deg, #fff 0 10px, #bbb 10px 11px, #fff 11px); }
.plist .tree-end { background: linear-gradient(#fff 0 9px, transparent 9px), linear-gradient(90deg, #fff 0 10px, #bbb 10px 11px, #fff 11px); }
.plist .grp { padding-left: 3px; }
.dash { display: inline-block; vertical-align: middle; width: 16px; height: 1px; background: #999; margin-right: 5px; }
.plist .blue { background: #316ac5; color: #fff; }
.plist .blue .dash { background: #cfe0ff; }
.pale { background: #dfe8f6; }
.group td { color: #888; }
.plus { display: inline-block; width: 13px; height: 13px; margin-right: 4px; text-align: center; border: 1px solid #aaa; color: #000; font: normal 13px/11px "Liberation Sans", sans-serif; vertical-align: middle; background: #eee; }
.vscroll { flex: none; width: 16px; background: #f3f1e6; display: flex; flex-direction: column; }
.vs-p { margin-left: 3px; }
.vthumb { background: linear-gradient(90deg, #c3d5fd, #b4cbf9); border: 1px solid #fff; border-radius: 2px; flex: none; }
.vt-p { height: 127px; }
.sb-b { margin-top: auto; margin-bottom: 2px; }

/* windows */
.win { position: absolute; display: flex; flex-direction: column; border-radius: 7px 7px 0 0; }
.title { flex: none; display: flex; align-items: center; border-radius: 7px 7px 0 0; }
.dlg1 { left: 430px; top: 14px; width: 558px; height: 442px; z-index: 3; background: #6f8ce2; border: 1px solid #5f7cd8; }
.t-off { height: 29px; padding: 0 4px 0 5px; background: linear-gradient(#6f8ee0, #7f9de6 50%, #6c8ade); }
.logo { width: 16px; height: 16px; flex: none; }
.cap { margin: 0 0 2px 3px; color: #c6d3f4; font-weight: 700; font-size: 14px; }
.ctl { width: 20px; height: 20px; margin-left: 3px; border: 1px solid #c4d2f5; border-radius: 3px; display: flex; align-items: center; justify-content: center; flex: none; }
.t-off .ctl { margin-top: 3px; }
.c-min { margin-left: auto; background: #6e8ad8; border-color: #88a0e2; }
.t-off .c-min { margin-left: auto; }
.minbar { width: 7px; height: 3px; background: #a6b8e8; margin-top: 7px; }
.c-max { background: #4d76dc; }
.maxbox { width: 11px; height: 11px; border: 1px solid #e8eefd; border-top-width: 2px; }
.off-x { background: #b8627c; border-color: #d8c4d4; }
.ctl svg { width: 14px; height: 14px; }
.client { flex: 1; background: #ece9d8; margin: 0 5px 4px 5px; display: flex; flex-direction: column; min-height: 0; }
.dlg1 .client { padding-top: 4px; }
.gridbox { height: 312px; display: flex; flex: none; background: #fff; border: 1px solid #8ba0c4; border-left-color: #aebcd4; }
.params { width: 524px; flex: none; align-self: flex-start; }
.q1 { width: 22px; } .q2 { width: 9px; } .q3 { width: 391px; } .q4 { width: 102px; }
.qh { height: 23px; }
.params tbody tr { height: 19px; }
.params td { background: #ffffe0; padding: 0; }
.params td.val { background: #fff; padding-left: 2px; }
.dim td, .dim .num { color: #8f8f88; }
.dash2 { display: inline-block; vertical-align: middle; width: 13px; height: 1px; background: #aaa; margin-right: 7px; }
.pick td.val { background: #dfe8f6; color: #0000e6; }
.vs-m { width: 18px; margin-left: 2px; }
.vt-m { height: 115px; margin-top: 34px; }
.hint { margin: 6px 0 0; line-height: 13px; height: 55px; white-space: nowrap; }
.actions { display: flex; justify-content: flex-end; gap: 14px; padding-right: 10px; }
.xp { width: 73px; height: 23px; padding: 0; margin: 0; font: 12px/14px "Noto Sans CJK SC", sans-serif; color: #000; border: 1px solid #003c74; border-radius: 3px; background: linear-gradient(#fff, #f2f0e6 80%, #dcd8c8); }

.dlg2 { left: 325px; top: 147px; width: 314px; height: 216px; z-index: 4; background: #0a4ce0; border: 1px solid #0831d9; }
.t-on { height: 29px; padding: 0 3px 0 6px; background: linear-gradient(#0058ee, #3593ff 6%, #127dff 10%, #0262ee 16%, #0054e3 28%, #0055eb 60%, #026afe 78%, #0062ef 88%, #0050d0); }
.cap2 { margin-bottom: 3px; color: #fff; font-weight: 700; font-size: 14px; text-shadow: 1px 1px #0f1089; }
.c-close2 { margin-left: auto; background: linear-gradient(135deg, #ee9070, #c8381c); border-color: #fff; }
.cl2 { margin: 0 3px 3px; }
.exprbox { height: 116px; flex: none; background: #fff; border-bottom: 1px solid #8ba0c4; padding-left: 1px; }
.expr { width: 304px; }
.e1 { width: 21px; } .e2 { width: 141px; } .e3 { width: 142px; }
.eh { height: 19px; }
.expr tbody tr { height: 19px; }
.hint2 { margin: 5px 0 0 8px; line-height: 14px; height: 36px; white-space: nowrap; }
.a2nd { gap: 9px; padding-right: 20px; }
.a2nd .xp { width: 55px; }
.def { box-shadow: inset 0 0 0 2px #a8c4ee; outline: 1px dotted #000; outline-offset: -4px; }

/* hand-drawn notes laid over the screenshot */
.marks { position: absolute; inset: 0; width: 1003px; height: 662px; z-index: 5; pointer-events: none; }
.marks ellipse { fill: none; stroke: #f00614; stroke-width: 1; }
.note { position: absolute; z-index: 6; background: #fff; color: #f00; font-size: 15px; line-height: 20px; white-space: nowrap; }
.n1 { left: 122px; top: 180px; width: 40px; height: 22px; padding-left: 1px; }
.n2 { left: 295px; top: 19px; width: 55px; height: 26px; padding-left: 3px; }
.n3 { left: 726px; top: 541px; width: 81px; height: 22px; }
.n4 { left: 930px; top: 284px; width: 40px; height: 19px; line-height: 18px; padding-left: 2px; }
.n5 { left: 555px; top: 200px; width: 118px; height: 26px; padding-left: 1px; }
```
